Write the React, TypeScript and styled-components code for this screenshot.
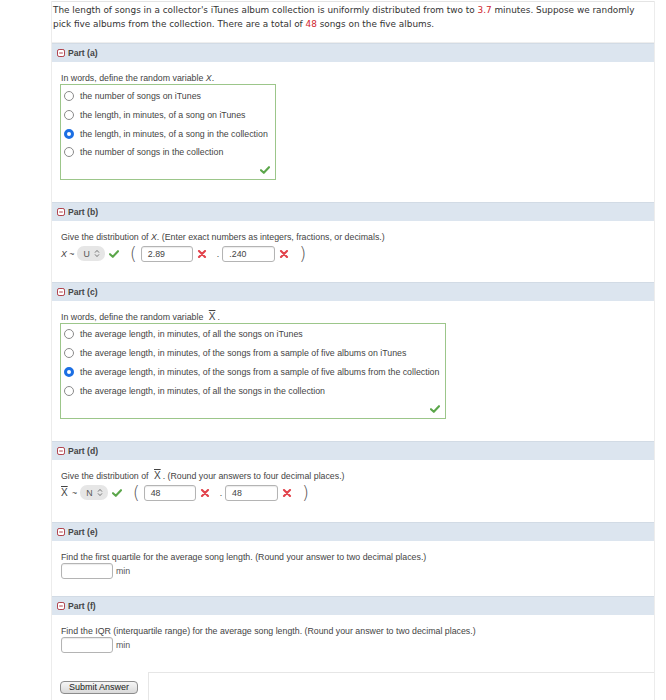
import React from "react";
import styled, { createGlobalStyle } from "styled-components";

const GlobalStyle = createGlobalStyle`
  html, body {
    margin: 0;
    padding: 0;
    background: #fff;
  }
  body {
    font-family: "Liberation Sans", Arial, sans-serif;
    color: #444;
  }
  * {
    box-sizing: border-box;
  }
`;

const Question = styled.div`
  margin-left: 51px;
  width: 604px;
  border-left: 1px solid #ececec;
  border-right: 1px solid #ececec;
`;

const Intro = styled.div`
  margin-top: 1px;
  border-top: 1px solid #e4e4e4;
  border-bottom: 1px solid #eeeeee;
  padding: 1px 4px 11px 1px;
  font-family: "DejaVu Sans", Verdana, sans-serif;
  font-size: 8.9px;
  line-height: 14px;
  color: #333;
`;

const Red = styled.span`
  color: #d0262e;
`;

const PartHeader = styled.div`
  display: flex;
  align-items: center;
  height: 19px;
  padding-left: 5px;
  background: #dce5ef;
  border-top: 1px solid #d2dbe5;
  font-size: 8.6px;
  font-weight: bold;
  color: #444;
`;

const Collapse = styled.svg`
  width: 8px;
  height: 8px;
  margin-right: 3px;
`;

const PartBody = styled.div<{ $bottom: number }>`
  padding: 10px 0 ${(p) => p.$bottom}px 9px;
`;

const Prompt = styled.div`
  font-size: 8.8px;
  line-height: 12px;
  color: #444;
`;

const Bar = styled.span`
  text-decoration: overline;
  font-size: 10px;
  margin: 0 2px 0 3px;
`;

const ChoiceBox = styled.div<{ $width: number; $top: number }>`
  width: ${(p) => p.$width}px;
  margin-left: -1px;
  border: 1px solid #9cc68a;
  padding: ${(p) => p.$top}px 0 0 3px;
`;

const Choice = styled.div<{ $h: number }>`
  display: flex;
  align-items: center;
  height: ${(p) => p.$h}px;
  font-size: 8.8px;
  color: #444;
`;

const Radio = styled.span<{ $on?: boolean }>`
  width: 10px;
  height: 10px;
  border-radius: 50%;
  margin-right: 6px;
  flex-shrink: 0;
  border: ${(p) => (p.$on ? "3px solid #1c6fe3" : "1px solid #8a8a8a")};
  background: #fff;
`;

const CheckRow = styled.div`
  display: flex;
  justify-content: flex-end;
  align-items: center;
  height: 17px;
  padding-right: 5px;
`;

const AnswerRow = styled.div<{ $top?: number }>`
  display: flex;
  align-items: center;
  height: 16px;
  margin-top: ${(p) => p.$top ?? 3}px;
  font-size: 8.8px;
  color: #444;
`;

const Symbol = styled.span`
  display: flex;
  align-items: center;
  font-size: 8.8px;
  margin-right: 3px;
  white-space: nowrap;
`;

const Pill = styled.span`
  display: flex;
  align-items: center;
  gap: 4px;
  height: 15px;
  padding: 0 5px 0 6px;
  border-radius: 7px;
  background: #e6e6e6;
  font-size: 8.8px;
  color: #555;
  margin-right: 4px;
`;

const Paren = styled.span<{ $l: number; $r: number }>`
  font-family: "DejaVu Sans", sans-serif;
  font-size: 18px;
  font-weight: 200;
  line-height: 16px;
  color: #555;
  margin: 0 ${(p) => p.$r}px 0 ${(p) => p.$l}px;
`;

const Field = styled.span<{ $w: number }>`
  display: flex;
  align-items: center;
  width: ${(p) => p.$w}px;
  height: 16px;
  padding-left: 6px;
  border: 1px solid #b4b4b4;
  border-radius: 3px;
  box-shadow: inset 0 1px 1px rgba(0, 0, 0, 0.08);
  background: #fff;
  font-size: 8.8px;
  color: #444;
`;

const Dot = styled.span`
  margin: 0 3px 0 10px;
  font-size: 8.8px;
`;

const Unit = styled.span`
  margin-left: 3px;
  font-size: 8.8px;
  color: #555;
`;

const Footer = styled.div`
  display: flex;
  height: 28px;
`;

const SubmitCell = styled.div`
  width: 97px;
  padding: 9px 0 0 8px;
  border-right: 1px solid #e6e6e6;
`;

const Filler = styled.div`
  flex: 1;
  border-top: 1px solid #e6e6e6;
`;

const SubmitButton = styled.button`
  display: block;
  width: 78px;
  height: 13px;
  padding: 0;
  border: 1px solid #8c8c8c;
  border-radius: 4px;
  background: linear-gradient(#f6f6f6, #d9d9d9);
  font-family: "Liberation Sans", Arial, sans-serif;
  font-size: 9px;
  line-height: 11px;
  color: #222;
`;

const MinusIcon = () => (
  <Collapse viewBox="0 0 8 8">
    <rect x="0.5" y="0.5" width="7" height="7" rx="1.6" fill="#fff" stroke="#b0424c" />
    <line x1="2.2" y1="4" x2="5.8" y2="4" stroke="#b0424c" strokeWidth="1" />
  </Collapse>
);

const Check = () => (
  <svg width="10" height="8" viewBox="0 0 10 8">
    <path d="M1 4.2 L3.8 6.8 L9 1.2" fill="none" stroke="#5ba64a" strokeWidth="2.1" strokeLinecap="round" strokeLinejoin="round" />
  </svg>
);

const Cross = () => (
  <svg width="10" height="8" viewBox="0 0 10 8" style={{ marginLeft: 4 }}>
    <path d="M2 1 L8 7 M8 1 L2 7" stroke="#e2434c" strokeWidth="2.1" strokeLinecap="round" />
  </svg>
);

const Arrows = () => (
  <svg width="6" height="9" viewBox="0 0 6 9">
    <path d="M1 3.6 L3 1.4 L5 3.6 M1 5.4 L3 7.6 L5 5.4" fill="none" stroke="#777" strokeWidth="1" />
  </svg>
);

const Header = ({ label }: { label: string }) => (
  <PartHeader>
    <MinusIcon />
    {label}
  </PartHeader>
);

const XBar = () => <Bar>X</Bar>;

const ChoiceList = ({
  items,
  selected,
  width,
  rowH,
  top,
}: {
  items: string[];
  selected: number;
  width: number;
  rowH: number;
  top: number;
}) => (
  <ChoiceBox $width={width} $top={top}>
    {items.map((t, i) => (
      <Choice key={t} $h={rowH}>
        <Radio $on={i === selected} />
        {t}
      </Choice>
    ))}
    <CheckRow>
      <Check />
    </CheckRow>
  </ChoiceBox>
);

const Distribution = ({
  symbol,
  family,
  a,
  b,
}: {
  symbol: React.ReactNode;
  family: string;
  a: string;
  b: string;
}) => (
  <AnswerRow>
    <Symbol>{symbol}</Symbol>
    <Pill>
      {family}
      <Arrows />
    </Pill>
    <Check />
    <Paren $l={11} $r={4}>(</Paren>
    <Field $w={52}>{a}</Field>
    <Cross />
    <Dot>.</Dot>
    <Field $w={53}>{b}</Field>
    <Cross />
    <Paren $l={10} $r={0}>)</Paren>
  </AnswerRow>
);

const partA = [
  "the number of songs on iTunes",
  "the length, in minutes, of a song on iTunes",
  "the length, in minutes, of a song in the collection",
  "the number of songs in the collection",
];

const partC = [
  "the average length, in minutes, of all the songs on iTunes",
  "the average length, in minutes, of the songs from a sample of five albums on iTunes",
  "the average length, in minutes, of the songs from a sample of five albums from the collection",
  "the average length, in minutes, of all the songs in the collection",
];

export default function App() {
  return (
    <>
      <GlobalStyle />
      <Question>
        <Intro>
          The length of songs in a collector's iTunes album collection is uniformly distributed from two to{" "}
          <Red>3.7</Red> minutes. Suppose we randomly
          <br />
          pick five albums from the collection. There are a total of <Red>48</Red> songs on the five albums.
        </Intro>

        <Header label="Part (a)" />
        <PartBody $bottom={22}>
          <Prompt>
            In words, define the random variable <i>X</i>.
          </Prompt>
          <ChoiceList items={partA} selected={2} width={216} rowH={18.7} top={2} />
        </PartBody>

        <Header label="Part (b)" />
        <PartBody $bottom={20}>
          <Prompt>
            Give the distribution of <i>X</i>. (Enter exact numbers as integers, fractions, or decimals.)
          </Prompt>
          <Distribution symbol={<><i>X</i>&nbsp;~</>} family="U" a="2.89" b=".240" />
        </PartBody>

        <Header label="Part (c)" />
        <PartBody $bottom={22}>
          <Prompt>
            In words, define the random variable <XBar />.
          </Prompt>
          <ChoiceList items={partC} selected={2} width={386} rowH={19} top={1} />
        </PartBody>

        <Header label="Part (d)" />
        <PartBody $bottom={21}>
          <Prompt>
            Give the distribution of <XBar />. (Round your answers to four decimal places.)
          </Prompt>
          <Distribution symbol={<><Bar style={{ marginLeft: 0 }}>X</Bar>&nbsp;~</>} family="N" a="48" b="48" />
        </PartBody>

        <Header label="Part (e)" />
        <PartBody $bottom={17}>
          <Prompt>Find the first quartile for the average song length. (Round your answer to two decimal places.)</Prompt>
          <AnswerRow $top={0}>
            <Field $w={52} />
            <Unit>min</Unit>
          </AnswerRow>
        </PartBody>

        <Header label="Part (f)" />
        <PartBody $bottom={19}>
          <Prompt>
            Find the IQR (interquartile range) for the average song length. (Round your answer to two decimal places.)
          </Prompt>
          <AnswerRow $top={0}>
            <Field $w={52} />
            <Unit>min</Unit>
          </AnswerRow>
        </PartBody>

        <Footer>
          <SubmitCell>
            <SubmitButton>Submit Answer</SubmitButton>
          </SubmitCell>
          <Filler />
        </Footer>
      </Question>
    </>
  );
}
